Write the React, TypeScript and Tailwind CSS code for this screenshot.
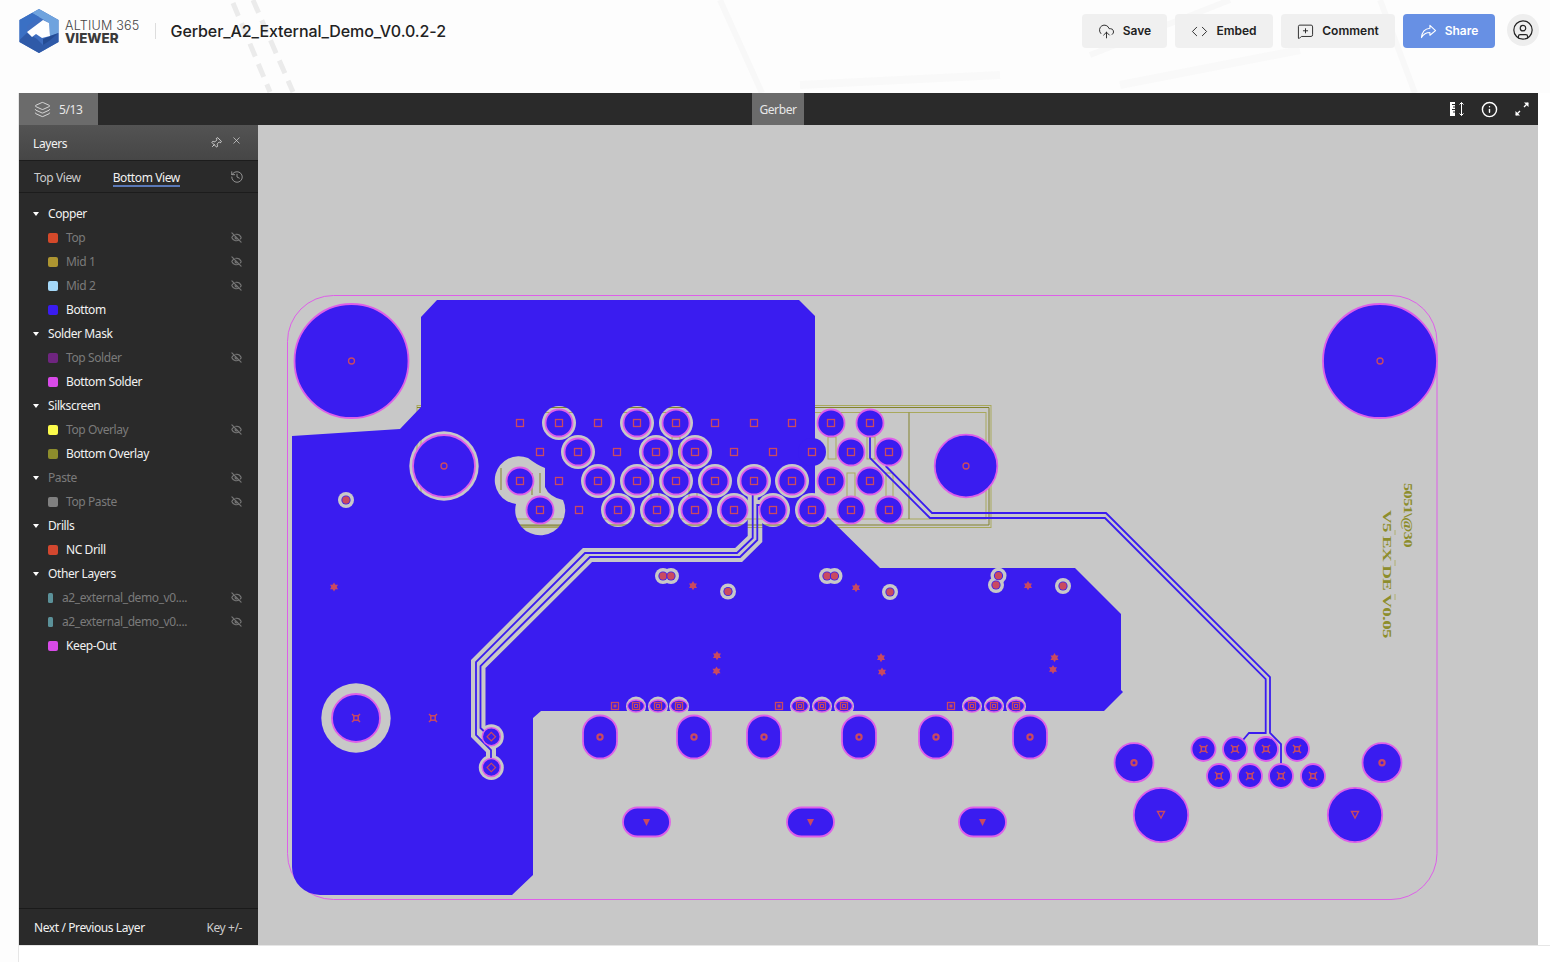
import { CircleUser, CloudUpload, Code, EyeOff, History, Info, Layers, MessageSquarePlus, Pin, X } from "lucide-react";

type Row = { name: string; color?: string; off?: boolean; group?: boolean; thin?: boolean };

const rows: Row[] = [
  { name: "Copper", group: true },
  { name: "Top", color: "bg-[#d4492a]", off: true },
  { name: "Mid 1", color: "bg-[#ad9531]", off: true },
  { name: "Mid 2", color: "bg-[#a5d8f8]", off: true },
  { name: "Bottom", color: "bg-[#3a1cf0]" },
  { name: "Solder Mask", group: true },
  { name: "Top Solder", color: "bg-[#6f2580]", off: true },
  { name: "Bottom Solder", color: "bg-[#d84ae8]" },
  { name: "Silkscreen", group: true },
  { name: "Top Overlay", color: "bg-[#fbfb4b]", off: true },
  { name: "Bottom Overlay", color: "bg-[#8d8d2c]" },
  { name: "Paste", group: true, off: true },
  { name: "Top Paste", color: "bg-[#808080]", off: true },
  { name: "Drills", group: true },
  { name: "NC Drill", color: "bg-[#d3472f]" },
  { name: "Other Layers", group: true },
  { name: "a2_external_demo_v0....", color: "bg-[#5b9199]", off: true, thin: true },
  { name: "a2_external_demo_v0....", color: "bg-[#5b9199]", off: true, thin: true },
  { name: "Keep-Out", color: "bg-[#d84ae8]" },
];

const RING = "#de5fe9";
const COPPER = "#3a1cf0";
const DRILL = "#c94a60";
const SILK = "#a9a95c";
const SILK_DARK = "#83832c";

// pads: x, y, clear = gets a hole in the plane
const bigPads: [number, number, boolean][] = [
  [559, 423, true], [637, 423, true], [676, 423, true], [831, 423, false], [870, 423, false],
  [578, 452, true], [656, 452, true], [695, 452, true], [851, 452, false], [889, 452, false],
  [520, 481, false], [598, 481, true], [637, 481, true], [676, 481, true], [715, 481, true], [754, 481, true], [792, 481, true], [831, 481, false], [870, 481, false],
  [540, 510, false], [618, 510, true], [657, 510, true], [695, 510, true], [734, 510, true], [773, 510, true], [812, 510, true], [851, 510, false], [889, 510, false],
];
const smallDrills: [number, number][] = [
  [520, 423], [598, 423], [715, 423], [754, 423], [792, 423],
  [540, 452], [617, 452], [734, 452], [773, 452], [812, 452],
  [559, 481], [579, 510],
];
const ovalGroups = [636, 658, 679, 800, 822, 844, 972, 994, 1016];
const squareDrills = [615, 779, 951];
const capsules = [600, 694, 764, 859, 936, 1030];
const flatCapsules = [647, 811, 983];
const vias: [number, number][] = [
  [663, 576], [671, 576], [728, 591.5], [827, 576], [834.5, 576], [890, 592], [998.5, 575.7], [996, 585], [1063, 586], [346, 500],
];
const stars: [number, number][] = [
  [693, 585.7], [856, 587.7], [1028, 585.7], [717, 655.7], [716.5, 671], [881, 657.7], [882, 672], [1054.5, 657.7], [1053, 669.5], [334, 587],
];
const connector: [number, number][] = [
  [1203.5, 749], [1235, 749], [1266, 749], [1297, 749], [1219, 776], [1250, 776], [1281, 776], [1313, 776],
];

const traceA = "M752.7 495V538L737 553H585L476 662V735L491 750V767";
const traceB = "M760 505H757.3V540L740 557H590L480.5 666V728L491 738";

function Square({ x, y, s = 7 }: { x: number; y: number; s?: number }) {
  return <rect x={x - s / 2} y={y - s / 2} width={s} height={s} fill="none" stroke={DRILL} strokeWidth="1.3" />;
}

function Star({ x, y }: { x: number; y: number }) {
  return (
    <g fill={DRILL}>
      <polygon points={`${x},${y - 4.6} ${x + 4},${y + 2.3} ${x - 4},${y + 2.3}`} />
      <polygon points={`${x},${y + 4.6} ${x + 4},${y - 2.3} ${x - 4},${y - 2.3}`} />
    </g>
  );
}

function Cross({ x, y, s = 3 }: { x: number; y: number; s?: number }) {
  return (
    <g stroke={DRILL} strokeWidth="1.5" fill="none">
      <rect x={x - s + 0.8} y={y - s + 0.8} width={(s - 0.8) * 2} height={(s - 0.8) * 2} />
      <path d={`M${x - s - 1} ${y - s - 1}l2 2M${x + s + 1} ${y - s - 1}l-2 2M${x - s - 1} ${y + s + 1}l2 -2M${x + s + 1} ${y + s + 1}l-2 -2`} />
    </g>
  );
}

function Pad({ x, y, r }: { x: number; y: number; r: number }) {
  return <circle cx={x} cy={y} r={r} fill={COPPER} stroke={RING} strokeWidth="1.8" />;
}

function Board() {
  return (
    <svg viewBox="258 125 1280 820" className="block w-[1280px] h-[820px]">
      <rect x="287.5" y="295.5" width="1149.5" height="604" rx="46" fill="none" stroke={RING} strokeWidth="1" />

      {/* silkscreen under copper, only seen through holes in the plane */}
      <g fill="none" stroke={SILK} strokeWidth="1">
        <rect x="417" y="405.5" width="574" height="122" />
        <rect x="421" y="412.5" width="565" height="106.5" />
        <path d="M501 468V490M540 473V493M532 473V495M520 526H560" stroke={SILK_DARK} />
        <rect x="672" y="437" width="8" height="22" />
        <rect x="651" y="473" width="8" height="24" />
        <rect x="689" y="473" width="8" height="24" />
        <rect x="828" y="437" width="8" height="22" />
        <rect x="867" y="437" width="8" height="22" />
        <rect x="847" y="473" width="8" height="24" />
        <rect x="886" y="473" width="7" height="24" />
        <path d="M909 412.5V519M417 407.5H989V525H417" stroke={SILK_DARK} />
      </g>

      <mask id="plane" maskUnits="userSpaceOnUse" x="258" y="125" width="1280" height="820">
        <rect x="258" y="125" width="1280" height="820" fill="white" />
        {bigPads.filter((p) => p[2]).map(([x, y]) => (
          <circle key={`${x}-${y}`} cx={x} cy={y} r="17" fill="black" />
        ))}
        <path d="M528 458Q537 465 545 468V487Q549 497 563 500A25 25 0 1 1 516 504A24 24 0 1 1 528 458Z" fill="black" />
        <circle cx="444" cy="466" r="34.7" fill="black" />
        <circle cx="356" cy="718" r="34.7" fill="black" />
        <circle cx="491.3" cy="736.7" r="12.5" fill="black" />
        <circle cx="491.3" cy="767.5" r="12.5" fill="black" />
        {vias.map(([x, y]) => (
          <circle key={`${x}-${y}`} cx={x} cy={y} r="8" fill="black" />
        ))}
        <path d={traceA} fill="none" stroke="black" strokeWidth="10" />
        <path d={traceB} fill="none" stroke="black" strokeWidth="10" />
        {ovalGroups.map((x) => (
          <circle key={x} cx={x} cy="706.5" r="10" fill="black" />
        ))}
      </mask>

      <path
        mask="url(#plane)"
        fill={COPPER}
        d="M421 317L437 300H799L815 316V515L828 517L880 568H1075L1121 614V690L1123 692L1104 711H541L533 718V875L512 895H320A28 28 0 0 1 292 867V436L400 429L421 407Z"
      />

      <g fill="none" stroke={COPPER} strokeWidth="1.8">
        <path d={traceA} />
        <path d={traceB} />
        <path d="M885.7 466L932 513H1106L1270 677V733L1281 744V767" />
        <path d="M870 423V458L930 518H1105L1265.7 679V733H1249L1243 740" />
      </g>

      <Pad x={351.5} y={361} r={57} />
      <Pad x={1380} y={361} r={57} />
      <Pad x={444} y={466} r={31} />
      <Pad x={966} y={466} r={31.3} />
      <Pad x={356} y={718} r={24} />
      <circle cx="351.5" cy="361" r="3" fill="none" stroke={DRILL} strokeWidth="1.3" />
      <circle cx="1380" cy="361" r="3" fill="none" stroke={DRILL} strokeWidth="1.3" />
      <circle cx="444" cy="466" r="3" fill="none" stroke={DRILL} strokeWidth="1.3" />
      <circle cx="966" cy="466" r="3" fill="none" stroke={DRILL} strokeWidth="1.3" />
      <Cross x={356} y={718} />
      <Cross x={433} y={718} />

      {bigPads.map(([x, y]) => (
        <g key={`${x}-${y}`}>
          <Pad x={x} y={y} r={13.5} />
          <Square x={x} y={y} />
        </g>
      ))}
      <circle cx="812" cy="452" r="14" fill={COPPER} />
      {smallDrills.map(([x, y]) => (
        <Square key={`${x}-${y}`} x={x} y={y} />
      ))}

      {vias.map(([x, y]) => (
        <g key={`${x}-${y}`}>
          <circle cx={x} cy={y} r="4.6" fill={COPPER} />
          <circle cx={x} cy={y} r="3.7" fill={DRILL} />
        </g>
      ))}
      {stars.map(([x, y]) => (
        <Star key={`${x}-${y}`} x={x} y={y} />
      ))}

      {[736.7, 767.5].map((y) => (
        <g key={y}>
          <circle cx="491.3" cy={y} r="9" fill={COPPER} stroke={RING} strokeWidth="1.5" />
          <rect x="488.3" y={y - 3} width="6" height="6" fill="none" stroke={DRILL} strokeWidth="1.2" transform={`rotate(45 491.3 ${y})`} />
        </g>
      ))}

      {ovalGroups.map((x) => (
        <g key={x}>
          <ellipse cx={x} cy="706" rx="8.5" ry="6" fill={COPPER} stroke={RING} strokeWidth="1.4" />
          <Square x={x} y={706} />
          <rect x={x - 1.5} y="704.5" width="3" height="3" fill="none" stroke={DRILL} strokeWidth="1" />
        </g>
      ))}
      {squareDrills.map((x) => (
        <g key={x}>
          <Square x={x} y={706} />
          <rect x={x - 1.5} y="704.5" width="3" height="3" fill={DRILL} />
        </g>
      ))}

      {capsules.map((x) => (
        <g key={x}>
          <rect x={x - 17} y="715.5" width="34" height="43" rx="17" fill={COPPER} stroke={RING} strokeWidth="1.8" />
          <circle cx={x} cy="737" r="2.6" fill="none" stroke={DRILL} strokeWidth="2.2" />
        </g>
      ))}
      {flatCapsules.map((x) => (
        <g key={x}>
          <rect x={x - 24} y="807.5" width="47" height="29" rx="14.5" fill={COPPER} stroke={RING} strokeWidth="1.8" />
          <polygon points={`${x - 4},819 ${x + 3},819 ${x - 0.5},826`} fill={DRILL} />
        </g>
      ))}

      {connector.map(([x, y]) => (
        <g key={`${x}-${y}`}>
          <Pad x={x} y={y} r={12} />
          <Cross x={x} y={y} />
        </g>
      ))}
      {[1134, 1382].map((x) => (
        <g key={x}>
          <Pad x={x} y={762.7} r={19.5} />
          <circle cx={x} cy="762.7" r="2.6" fill="none" stroke={DRILL} strokeWidth="2.2" />
        </g>
      ))}
      {[1161, 1355].map((x) => (
        <g key={x}>
          <Pad x={x} y={815} r={27.2} />
          <polygon points={`${x - 3.5},811.5 ${x + 3.5},811.5 ${x},818`} fill="none" stroke={DRILL} strokeWidth="1.4" />
        </g>
      ))}

      <text transform="translate(1404 483) rotate(90)" textLength="64" lengthAdjust="spacingAndGlyphs" className="font-['Liberation_Serif',serif] text-[13.5px] font-bold" fill="#8d8d2c">
        5051\@30
      </text>
      <text transform="translate(1382.7 510) rotate(90)" textLength="128" lengthAdjust="spacingAndGlyphs" className="font-['Liberation_Serif',serif] text-[13.5px] font-bold" fill="#8d8d2c">
        V5 EX DE V0.05
      </text>
      <path d="M1395 530V535M1395 560V566M1395 594V600" stroke={SILK} strokeWidth="0.8" />
    </svg>
  );
}

function Logo() {
  return (
    <svg viewBox="0 0 40 44" className="w-[40px] h-[44px] shrink-0">
      <polygon points="20,0 39.5,11 39.5,33 20,44 0.5,33 0.5,11" fill="#3f6ec0" />
      <polygon points="20,0 39.5,11 39.5,24 31,27 30,14 20,8 13,4" fill="#6fa3de" />
      <polygon points="0.5,11 13,4 20,8 8,17 8,24 0.5,31" fill="#3a70c4" />
      <polygon points="0.5,31 8,24 18,30 24,36 30,30 39.5,24 39.5,33 20,44 0.5,33" fill="#2f5aa8" />
      <polygon points="24,30 31,27 39.5,24 30,32 24,36" fill="#254c94" />
      <polygon points="8,23 24,11 30,14 31,27 23,29 17,25 13,28" fill="#ffffff" />
    </svg>
  );
}

function HeaderButton({ label, icon, width, primary }: { label: string; icon: React.ReactNode; width: string; primary?: boolean }) {
  return (
    <button className={`flex h-[34px] items-center justify-center gap-[8px] rounded-[4px] text-[12px] font-semibold ${width} ${primary ? "bg-[#6790e4] text-white" : "bg-[#f0f0f0] text-[#222]"}`}>
      {icon}
      <span>{label}</span>
    </button>
  );
}

function LayerRow({ row }: { row: Row }) {
  const text = row.off ? "text-[#7b7b7b]" : "text-[#f2f2f2]";
  return (
    <div className="flex h-[24px] items-center pr-[15px]">
      {row.group ? (
        <>
          <span className="ml-[14px] mr-[9px] h-0 w-0 border-x-[3.5px] border-t-[4px] border-x-transparent border-t-white" />
          <span className={`flex-1 ${text}`}>{row.name}</span>
        </>
      ) : (
        <>
          {row.thin ? (
            <span className={`ml-[29px] mr-[9px] h-[10px] w-[5px] rounded-[1.5px] ${row.color}`} />
          ) : (
            <span className={`ml-[29px] mr-[8px] h-[10px] w-[10px] rounded-[2px] ${row.color}`} />
          )}
          <span className={`flex-1 ${text}`}>{row.name}</span>
        </>
      )}
      {row.off && <EyeOff size={11} strokeWidth={2.6} className="-mt-[1px] mr-[1px] text-[#767676]" />}
    </div>
  );
}

export default function App() {
  return (
    <div className="relative flex h-[962px] w-[1550px] flex-col overflow-hidden bg-[#fdfdfd] font-['Inter',sans-serif]">
      <svg className="absolute left-0 top-0 h-[93px] w-[1550px]" viewBox="0 0 1550 93">
        <path d="M233 3L270 92M253 0L293 92" stroke="#ebebeb" strokeWidth="5" strokeDasharray="14 8" fill="none" />
        <path d="M720 0L762 93M1090 55L1230 0M1380 0L1415 93" stroke="#f8f8f8" strokeWidth="6" fill="none" />
        <path d="M800 85L1000 75M1120 85L1300 50" stroke="#f9f9f9" strokeWidth="8" fill="none" />
      </svg>

      <header className="relative flex h-[93px] shrink-0 items-start pl-[19px] pr-[11px] pt-[14px]">
        <div className="-mt-[5px] flex items-center">
          <Logo />
          <div className="ml-[6px] flex flex-col pt-[2px] leading-[13px] text-[#444]">
            <span className="text-[12.6px] font-light tracking-[0.2px]">ALTIUM 365</span>
            <span className="text-[13.4px] font-extrabold text-[#3a3a3a]">VIEWER</span>
          </div>
          <span className="ml-[15px] mr-[15px] h-[16px] w-px bg-[#dddddd]" />
          <h1 className="text-[16px] font-medium tracking-[-0.09px] text-[#222]">Gerber_A2_External_Demo_V0.0.2-2</h1>
        </div>
        <div className="ml-auto flex items-start gap-[8px]">
          <HeaderButton label="Save" width="w-[85px]" icon={<CloudUpload size={17} strokeWidth={1.3} />} />
          <HeaderButton label="Embed" width="w-[98px]" icon={<Code size={17} strokeWidth={1.3} />} />
          <HeaderButton label="Comment" width="w-[114px]" icon={<MessageSquarePlus size={17} strokeWidth={1.3} />} />
          <HeaderButton
            label="Share"
            width="w-[92px]"
            primary
            icon={
              <svg viewBox="0 0 18 16" className="h-[15px] w-[17px]" fill="none" stroke="white" strokeWidth="1.2" strokeLinejoin="round">
                <path d="M10.5 1.5L16.5 7L10.5 12V9C6 9 3.5 11 1.5 14.5C2 9 5 5 10.5 4.5Z" />
              </svg>
            }
          />
          <div className="ml-[4px] flex h-[32px] w-[32px] items-center justify-center rounded-full bg-[#eeeeee]">
            <CircleUser size={22} strokeWidth={1.3} className="text-[#222]" />
          </div>
        </div>
      </header>

      <div className="ml-[18px] flex flex-1 flex-col border-l border-[#e6e6e6] bg-white">
        <div className="flex h-[852px] w-[1519px] flex-col font-['Noto_Sans',sans-serif] text-[12px] tracking-[-0.4px]">
          <div className="relative flex h-[32px] shrink-0 items-center bg-[#2a2a2a] text-[#e8e8e8]">
            <div className="flex h-full w-[79px] items-center gap-[8px] bg-[#6b6b6b] pl-[15px]">
              <Layers size={17} strokeWidth={1.2} />
              <span className="pt-[2px]">5/13</span>
            </div>
            <div className="absolute left-[733px] flex h-full w-[52px] items-center justify-center bg-[#6b6b6b] pt-[2px]">Gerber</div>
            <div className="ml-auto flex items-center gap-[16px] pr-[8px]">
              <svg viewBox="0 0 16 16" className="h-[16px] w-[16px]" fill="none" stroke="white">
                <path d="M1 1H6V15H1Z" fill="white" stroke="none" />
                <path d="M3 3.5H6M4 6H6M3 8.5H6M4 11H6" stroke="#2a2a2a" strokeWidth="1" />
                <path d="M12.5 1.5V14.5M10.5 3.5L12.5 1.5L14.5 3.5M10.5 12.5L12.5 14.5L14.5 12.5" strokeWidth="1" />
              </svg>
              <Info size={17} strokeWidth={2} className="text-white" />
              <svg viewBox="0 0 16 16" className="h-[16px] w-[16px]" fill="white" stroke="white" strokeWidth="1.3">
                <path d="M10 6L14 2M2 14L6 10" fill="none" />
                <path d="M10 1.5H14.5V6ZM1.5 10V14.5H6Z" stroke="none" />
              </svg>
            </div>
          </div>

          <div className="flex min-h-0 flex-1">
            <aside className="flex w-[239px] shrink-0 flex-col bg-[#2a2a2a] text-[#f2f2f2]">
              <div className="flex h-[36px] shrink-0 items-center border-b border-[#1c1c1c] bg-gradient-to-b from-[#535353] to-[#464646] pl-[14px] pr-[16px]">
                <span className="flex-1 pt-[2px]">Layers</span>
                <Pin size={12} strokeWidth={1.5} className="mr-[9px] rotate-45" />
                <X size={11} strokeWidth={1.5} className="-mt-[4px] text-[#dddddd]" />
              </div>
              <div className="flex h-[32px] shrink-0 items-center border-b border-[#1c1c1c] pl-[15px] pr-[14px]">
                <span className="mr-[32px] pt-[3px] text-[#cccccc]">Top View</span>
                <span className="mt-[3px] border-b-2 border-[#5b79b8] leading-[15px]">Bottom View</span>
                <History size={14} strokeWidth={1.4} className="ml-auto text-[#a8a8a8]" />
              </div>
              <div className="flex-1 pt-[9px]">
                {rows.map((row, i) => (
                  <LayerRow key={i} row={row} />
                ))}
              </div>
              <div className="flex h-[37px] shrink-0 items-center justify-between border-t border-[#1a1a1a] pl-[15px] pr-[16px] pt-[2px]">
                <span>Next / Previous Layer</span>
                <span className="text-[#cccccc]">Key +/-</span>
              </div>
            </aside>
            <main className="flex-1 bg-[#c8c8c8]">
              <Board />
            </main>
          </div>
        </div>
        <div className="flex-1 border-t border-[#e6e6e6] bg-white" />
      </div>
    </div>
  );
}
